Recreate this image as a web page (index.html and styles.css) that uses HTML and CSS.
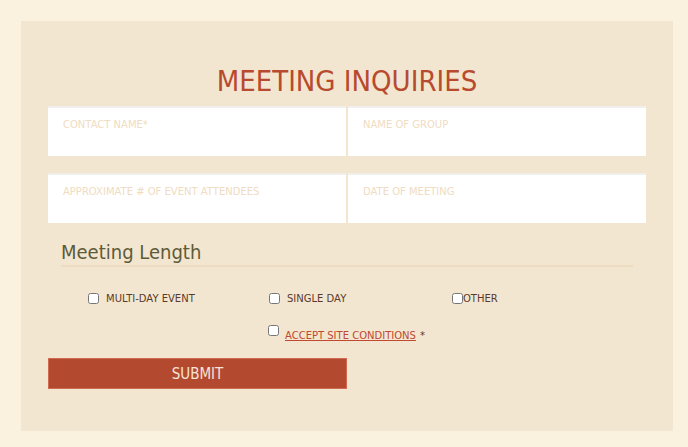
FILE: index.html
```html
<!DOCTYPE html>
<html>
<head>
<meta charset="utf-8">
<link rel="stylesheet" href="styles.css">
</head>
<body>
<div class="panel">
  <h1 class="title">MEETING INQUIRIES</h1>
  <div class="grid">
    <div class="field"><span class="label">CONTACT NAME*</span></div>
    <div class="field"><span class="label">NAME OF GROUP</span></div>
  </div>
  <div class="grid">
    <div class="field"><span class="label">APPROXIMATE # OF EVENT ATTENDEES</span></div>
    <div class="field"><span class="label">DATE OF MEETING</span></div>
  </div>
  <h2 class="section">Meeting Length</h2>
  <div class="options">
    <label class="opt"><input type="checkbox"><span>MULTI-DAY EVENT</span></label>
    <label class="opt"><input type="checkbox"><span>SINGLE DAY</span></label>
    <label class="opt tight"><input type="checkbox"><span>OTHER</span></label>
  </div>
  <div class="accept">
    <input type="checkbox"><a href="#" class="link">ACCEPT SITE CONDITIONS</a><span class="star">*</span>
  </div>
  <div class="actions">
    <button class="submit">SUBMIT</button>
  </div>
</div>
</body>
</html>
```
FILE: styles.css
```css
html, body { margin: 0; padding: 0; }
body {
  background: #faf1df;
  font-family: "DejaVu Sans", Verdana, sans-serif;
  padding: 21px 15px 16px 21px;
}
.panel {
  background: #f3e6d0;
  height: 410px;
  padding: 0 27px;
  box-sizing: border-box;
  overflow: hidden;
}
.title {
  margin: 0 0 8px;
  padding-top: 43px;
  text-align: center;
  font-family: "DejaVu Sans Condensed", "DejaVu Sans", sans-serif;
  font-weight: normal;
  font-size: 29px;
  line-height: 34px;
  color: #b74a2f;
}
.grid {
  display: grid;
  grid-template-columns: 1fr 1fr;
  gap: 2px;
  margin-bottom: 17px;
}
.field {
  background: #fff;
  height: 50px;
  box-sizing: border-box;
  border-top: 2px solid #f1efec;
  padding: 9px 15px;
  line-height: 12px;
}
.label {
  font-size: 10px;
  color: #efdcc2;
}
.section {
  margin: 2px 13px 0;
  font-family: "DejaVu Sans Condensed", "DejaVu Sans", sans-serif;
  font-weight: normal;
  font-size: 20px;
  color: #5d5b3a;
  line-height: 24px;
  padding-bottom: 1px;
  border-bottom: 2px solid #ecdcc2;
}
.options {
  display: grid;
  grid-template-columns: 181px 183px 1fr;
  padding-left: 39px;
  margin-top: 23px;
  height: 17px;
}
.opt {
  display: flex;
  align-items: center;
  font-size: 10px;
  color: #5a3a2a;
}
.opt input { margin: 0 7px 0 1px; width: 11px; height: 11px; }
.opt.tight input { margin-right: 0; }
.accept {
  display: flex;
  align-items: flex-start;
  padding-left: 219px;
  margin-top: 18px;
  height: 20px;
  font-size: 10px;
}
.accept input { margin: 0 6px 0 1px; width: 11px; height: 11px; }
.link {
  color: #c0492f;
  margin-top: 5px;
}
.star { margin-top: 5px; margin-left: 4px; color: #5a3a2a; }
.actions {
  display: grid;
  grid-template-columns: 1fr 1fr;
  margin-top: 13px;
}
.submit {
  background: #b34a30;
  border: 1px solid #d06a50;
  color: #f6e4d6;
  font-family: "DejaVu Sans Condensed", "DejaVu Sans", sans-serif;
  font-size: 15px;
  height: 31px;
  padding: 0;
}
```
